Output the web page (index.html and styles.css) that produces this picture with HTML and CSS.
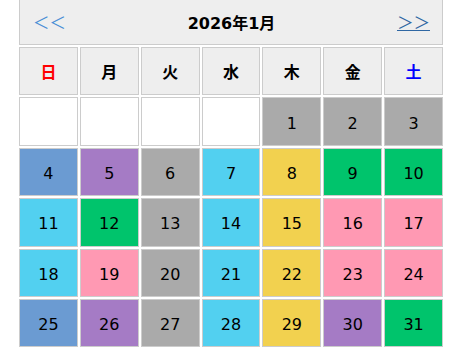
FILE: index.html
```html
<!DOCTYPE html>
<html lang="ja">
<head>
<meta charset="utf-8">
<title>2026年1月</title>
<link rel="stylesheet" href="styles.css">
</head>
<body>
<div class="cal">
  <div class="cal-head">
    <a class="nav nav-prev" href="#">＜＜</a>
    <span class="title">2026年1月</span>
    <a class="nav nav-next" href="#">＞＞</a>
  </div>
  <div class="grid">
    <div class="cell dow sun">日</div>
    <div class="cell dow">月</div>
    <div class="cell dow">火</div>
    <div class="cell dow">水</div>
    <div class="cell dow">木</div>
    <div class="cell dow">金</div>
    <div class="cell dow sat">土</div>

    <div class="cell empty"></div>
    <div class="cell empty"></div>
    <div class="cell empty"></div>
    <div class="cell empty"></div>
    <div class="cell day grey">1</div>
    <div class="cell day grey">2</div>
    <div class="cell day grey">3</div>

    <div class="cell day blue">4</div>
    <div class="cell day purple">5</div>
    <div class="cell day grey">6</div>
    <div class="cell day cyan">7</div>
    <div class="cell day yellow">8</div>
    <div class="cell day green">9</div>
    <div class="cell day green">10</div>

    <div class="cell day cyan">11</div>
    <div class="cell day green">12</div>
    <div class="cell day grey">13</div>
    <div class="cell day cyan">14</div>
    <div class="cell day yellow">15</div>
    <div class="cell day pink">16</div>
    <div class="cell day pink">17</div>

    <div class="cell day cyan">18</div>
    <div class="cell day pink">19</div>
    <div class="cell day grey">20</div>
    <div class="cell day cyan">21</div>
    <div class="cell day yellow">22</div>
    <div class="cell day pink">23</div>
    <div class="cell day pink">24</div>

    <div class="cell day blue">25</div>
    <div class="cell day purple">26</div>
    <div class="cell day grey">27</div>
    <div class="cell day cyan">28</div>
    <div class="cell day yellow">29</div>
    <div class="cell day purple">30</div>
    <div class="cell day green">31</div>
  </div>
</div>
</body>
</html>
```
FILE: styles.css
```css
* { box-sizing: border-box; }

html, body {
  margin: 0;
  padding: 0;
  background: #fff;
}

body {
  font-family: "DejaVu Sans", "Noto Sans CJK JP", sans-serif;
  color: #000;
}

.cal {
  width: 424px;
  margin: -3.4px 0 0 19px;
  display: flex;
  flex-direction: column;
  gap: 2px;
}

.cal-head {
  height: 48.4px;
  background: #eeeeee;
  border: 1px solid #cccccc;
  display: flex;
  align-items: center;
  justify-content: space-between;
  padding: 3px 12px 0 13px;
}

.nav {
  font-family: "Noto Sans CJK JP", sans-serif;
  font-size: 16.5px;
  line-height: 1;
}

.nav-prev {
  color: #4a8fd6;
  text-decoration: none;
}

.nav-next {
  color: #2f67a3;
  text-decoration: underline;
}

.title {
  font-size: 16px;
  font-weight: bold;
}

.grid {
  display: grid;
  grid-template-columns: repeat(7, 1fr);
  grid-auto-rows: 48.4px;
  gap: 2px;
}

.cell {
  border: 1px solid #cccccc;
  display: flex;
  align-items: center;
  justify-content: center;
  font-size: 16px;
}

.dow {
  background: #eeeeee;
  font-weight: bold;
}

.sun { color: #ff0000; }
.sat { color: #0000ff; }

.empty { background: #ffffff; }

.day { padding-top: 3px; }

.grey   { background: #aaaaaa; }
.blue   { background: #6b9bd2; }
.purple { background: #a57bc5; }
.cyan   { background: #52d0f0; }
.yellow { background: #f2d14f; }
.green  { background: #00c46c; }
.pink   { background: #ff99b3; }
```
